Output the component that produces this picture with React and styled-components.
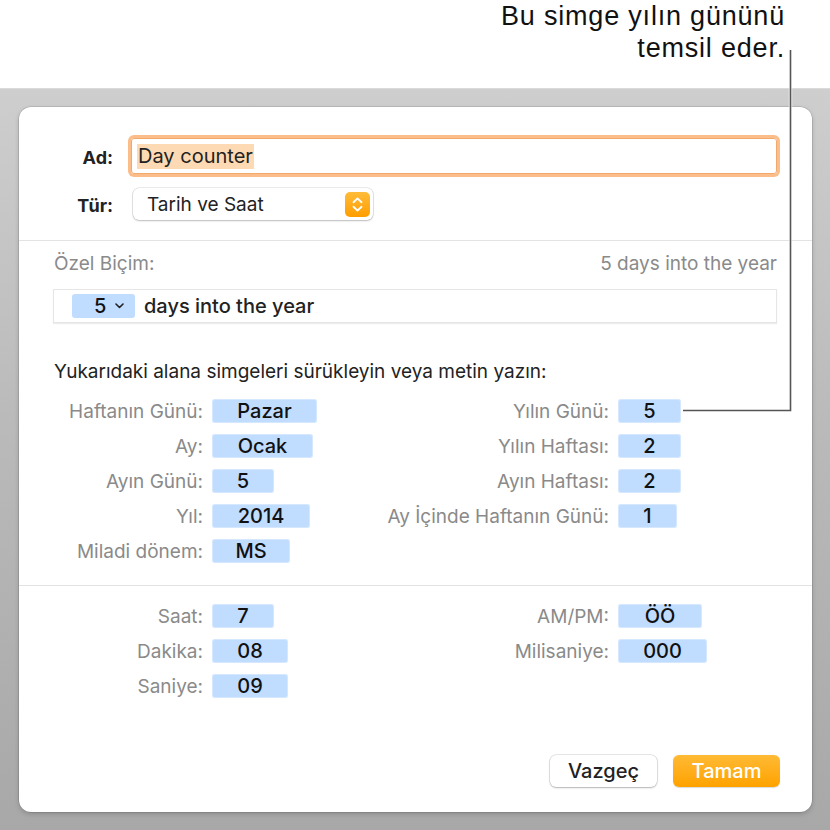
import React from "react";
import styled, { createGlobalStyle } from "styled-components";

const GlobalStyle = createGlobalStyle`
  html, body {
    margin: 0;
    padding: 0;
    background: #fff;
  }
  body {
    font-family: Inter, "Noto Sans", sans-serif;
    -webkit-font-smoothing: antialiased;
  }
`;

const dateRows = [
  { label: "Haftanın Günü:", value: "Pazar", w: 105, rLabel: "Yılın Günü:", rValue: "5", rw: 63 },
  { label: "Ay:", value: "Ocak", w: 101, rLabel: "Yılın Haftası:", rValue: "2", rw: 63 },
  { label: "Ayın Günü:", value: "5", w: 62, rLabel: "Ayın Haftası:", rValue: "2", rw: 63 },
  { label: "Yıl:", value: "2014", w: 98, rLabel: "Ay İçinde Haftanın Günü:", rValue: "1", rw: 59 },
  { label: "Miladi dönem:", value: "MS", w: 78 },
];

const timeRows = [
  { label: "Saat:", value: "7", w: 62, rLabel: "AM/PM:", rValue: "ÖÖ", rw: 84 },
  { label: "Dakika:", value: "08", w: 76, rLabel: "Milisaniye:", rValue: "000", rw: 89 },
  { label: "Saniye:", value: "09", w: 76 },
];

const StepperIcon = () => (
  <svg width="25" height="25" viewBox="0 0 25 25">
    <defs>
      <linearGradient id="stp" x1="0" y1="0" x2="0" y2="1">
        <stop offset="0" stopColor="#ffbc3a" />
        <stop offset="1" stopColor="#ff9d00" />
      </linearGradient>
    </defs>
    <rect x="0" y="0" width="25" height="25" rx="5" fill="url(#stp)" />
    <path d="M8.5 10.2 L12.5 6.4 L16.5 10.2" fill="none" stroke="#fff" strokeWidth="1.9" strokeLinecap="round" strokeLinejoin="round" />
    <path d="M8.5 14.8 L12.5 18.6 L16.5 14.8" fill="none" stroke="#fff" strokeWidth="1.9" strokeLinecap="round" strokeLinejoin="round" />
  </svg>
);

const ChevronDown = () => (
  <svg width="9" height="6" viewBox="0 0 9 6">
    <path d="M1 1 L4.5 4.5 L8 1" fill="none" stroke="#222" strokeWidth="1.6" strokeLinecap="round" strokeLinejoin="round" />
  </svg>
);

const TokenRows = ({ rows }) =>
  rows.map((r) => (
    <React.Fragment key={r.label}>
      <TokenLabel>{r.label}</TokenLabel>
      <Token $w={r.w}>{r.value}</Token>
      {r.rLabel && <TokenLabel>{r.rLabel}</TokenLabel>}
      {r.rLabel && <Token $w={r.rw}>{r.rValue}</Token>}
    </React.Fragment>
  ));

const App = () => {
  return (
    <Page>
      <GlobalStyle />
      <Header>
        Bu simge yılın gününü
        <br />
        temsil eder.
      </Header>
      <Backdrop>
        <Dialog>
          <TopSection>
            <FieldLabel>Ad:</FieldLabel>
            <NameInput>
              <Selected>Day counter</Selected>
            </NameInput>
            <FieldLabel>Tür:</FieldLabel>
            <Select>
              Tarih ve Saat
              <StepperIcon />
            </Select>
          </TopSection>
          <Divider />
          <FormatSection>
            <FormatHeader>
              <span>Özel Biçim:</span>
              <span>5 days into the year</span>
            </FormatHeader>
            <FormatBox>
              <FormatToken>
                5 <ChevronDown />
              </FormatToken>
              days into the year
            </FormatBox>
            <Hint>Yukarıdaki alana simgeleri sürükleyin veya metin yazın:</Hint>
            <TokenGrid>
              <TokenRows rows={dateRows} />
            </TokenGrid>
          </FormatSection>
          <Divider />
          <TimeSection>
            <TokenGrid>
              <TokenRows rows={timeRows} />
            </TokenGrid>
          </TimeSection>
          <Footer>
            <Button>Vazgeç</Button>
            <Button $primary>Tamam</Button>
          </Footer>
        </Dialog>
      </Backdrop>
      <Leader width="830" height="830" viewBox="0 0 830 830">
        <path d="M790.5 50 V410.5 H683" fill="none" stroke="#fff" strokeOpacity="0.7" strokeWidth="3.5" />
        <path d="M790.5 50 V410.5 H683" fill="none" stroke="#555" strokeWidth="1.6" />
      </Leader>
    </Page>
  );
};

const Page = styled.div`
  position: relative;
  width: 830px;
  height: 830px;
  display: flex;
  flex-direction: column;
  overflow: hidden;
`;

const Header = styled.div`
  height: 88px;
  box-sizing: border-box;
  padding: 0 45px 0 0;
  text-align: right;
  font-family: "Liberation Sans", Arial, sans-serif;
  font-size: 27px;
  letter-spacing: 0.8px;
  line-height: 32px;
  color: #111;
`;

const Backdrop = styled.div`
  flex: 1;
  padding: 18px 18px 18px 19px;
  border-top: 1px solid #dadada;
  background: linear-gradient(180deg, #cecece 0%, #bababa 45%, #a8a8a8 100%);
`;

const Dialog = styled.div`
  background: #fff;
  border-radius: 12px;
  box-shadow: 0 0 0 0.5px rgba(0, 0, 0, 0.18), 0 2px 5px rgba(0, 0, 0, 0.18);
`;

const TopSection = styled.div`
  display: grid;
  grid-template-columns: 59px 1fr;
  column-gap: 18px;
  row-gap: 14px;
  align-items: center;
  padding: 31px 35px 20px;
`;

const FieldLabel = styled.div`
  justify-self: end;
  font-size: 18px;
  font-weight: 700;
  color: #222;
  padding-top: 3px;
`;

const NameInput = styled.div`
  height: 36px;
  box-sizing: border-box;
  border: 1px solid #f2a96c;
  border-radius: 3px;
  box-shadow: 0 0 0 3px rgba(250, 178, 118, 0.85);
  display: flex;
  align-items: center;
  padding-left: 5px;
`;

const Selected = styled.span`
  background: #fedab4;
  font-size: 20px;
  line-height: 25px;
  color: #222;
  padding: 0 1px;
`;

const Select = styled.div`
  justify-self: start;
  margin-left: 2px;
  width: 240px;
  height: 32px;
  box-sizing: border-box;
  display: flex;
  align-items: center;
  justify-content: space-between;
  padding: 0 3px 0 14px;
  border-radius: 6px;
  background: #fff;
  box-shadow: 0 0 0 0.5px rgba(0, 0, 0, 0.16), 0 1px 2px rgba(0, 0, 0, 0.2);
  font-size: 19px;
  color: #222;
`;

const Divider = styled.div`
  height: 1px;
  background: #e3e3e3;
`;

const FormatSection = styled.div`
  padding: 12px 35px 22px;
`;

const FormatHeader = styled.div`
  display: flex;
  justify-content: space-between;
  font-size: 19px;
  line-height: 22px;
  color: #8a8a8a;
`;

const FormatBox = styled.div`
  margin: 14px 0 0 -1px;
  height: 34px;
  box-sizing: border-box;
  border: 1px solid #e6e6e6;
  box-shadow: 0 1px 1px rgba(0, 0, 0, 0.07);
  display: flex;
  align-items: center;
  gap: 9px;
  padding-left: 18px;
  font-size: 20px;
  font-weight: 500;
  color: #222;
`;

const FormatToken = styled.div`
  width: 63px;
  height: 24px;
  box-sizing: border-box;
  display: flex;
  align-items: center;
  gap: 9px;
  padding-left: 22px;
  border-radius: 3px;
  background: #c0dcff;
  font-size: 20px;
  color: #111;
`;

const Hint = styled.div`
  margin-top: 38px;
  font-size: 19px;
  line-height: 22px;
  color: #222;
`;

const TokenGrid = styled.div`
  margin-top: 16px;
  display: grid;
  grid-template-columns: 149px 160px 228px 1fr;
  grid-auto-rows: 24px;
  column-gap: 9px;
  row-gap: 11px;
`;

const TokenLabel = styled.div`
  justify-self: end;
  align-self: center;
  white-space: nowrap;
  font-size: 19px;
  color: #8a8a8a;
`;

const Token = styled.div`
  width: ${(p) => p.$w}px;
  height: 24px;
  display: flex;
  align-items: center;
  justify-content: center;
  border-radius: 3px;
  background: #c0dcff;
  box-shadow: inset 0 0 0 1px rgba(255, 255, 255, 0.35);
  font-size: 20px;
  font-weight: 500;
  color: #111;
`;

const TimeSection = styled.div`
  padding: 2px 35px 0;
`;

const Footer = styled.div`
  display: flex;
  justify-content: flex-end;
  gap: 16px;
  padding: 57px 32px 25px;
`;

const Button = styled.div`
  width: 107px;
  height: 32px;
  display: flex;
  align-items: center;
  justify-content: center;
  border-radius: 6px;
  font-size: 20px;
  font-weight: 500;
  color: ${(p) => (p.$primary ? "#fff" : "#222")};
  background: ${(p) =>
    p.$primary ? "linear-gradient(180deg, #ffba35 0%, #ffa200 100%)" : "#fff"};
  box-shadow: ${(p) =>
    p.$primary
      ? "0 0.5px 1px rgba(0, 0, 0, 0.15)"
      : "0 0 0 0.5px rgba(0, 0, 0, 0.18), 0 1px 2px rgba(0, 0, 0, 0.22)"};
`;

const Leader = styled.svg`
  position: absolute;
  top: 0;
  left: 0;
  pointer-events: none;
`;

export default App;
